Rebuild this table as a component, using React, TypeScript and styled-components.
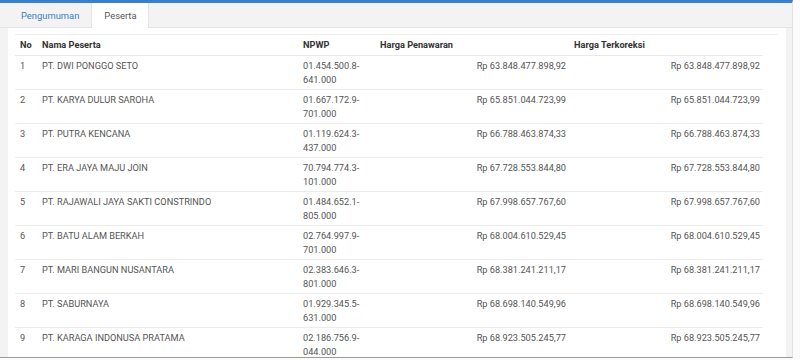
import React from "react";
import styled, { createGlobalStyle } from "styled-components";

const Global = createGlobalStyle`
  html, body { margin: 0; padding: 0; background: #fbfbfb; }
  body { font-family: Roboto, "Noto Sans", "Liberation Sans", sans-serif; }
`;

const Viewport = styled.div`
  width: 800px;
  height: 360px;
  overflow: hidden;
  display: flex;
  background: #fbfbfb;
`;

const Page = styled.div`
  width: 793px;
  height: 358px;
  overflow: hidden;
  flex: none;
  background: #f3f3f3;
  border-top: 3px solid #3a7fcb;
  border-right: 1px solid #e2e2e2;
  border-bottom: 1px solid #9a9a9a;
  box-sizing: border-box;
  display: flex;
  flex-direction: column;
`;

const TabBar = styled.div`
  display: flex;
  height: 24px;
  padding-left: 8px;
  border-bottom: 1px solid #e3e3e3;
  flex: none;
`;

const Tab = styled.div<{ $active?: boolean }>`
  display: flex;
  align-items: center;
  padding: 0 11px 0 12px;
  font-size: 9.4px;
  color: ${(p) => (p.$active ? "#555" : "#3b7fc4")};
  background: ${(p) => (p.$active ? "#fff" : "transparent")};
  border-left: 1px solid ${(p) => (p.$active ? "#e3e3e3" : "transparent")};
  border-right: 1px solid ${(p) => (p.$active ? "#e3e3e3" : "transparent")};
  margin-bottom: ${(p) => (p.$active ? "-1px" : "0")};
`;

const Panel = styled.div`
  margin-left: 8px;
  width: 778px;
  flex: 1;
  background: #fff;
  padding: 6px 8px 0 7px;
  box-sizing: border-box;
`;

const TableWrap = styled.div`
  border-top: 1px solid #ededed;
`;

const Table = styled.table`
  width: 748px;
  table-layout: fixed;
  border-collapse: collapse;
  font-size: 9.2px;
  color: #555;
`;

const Col = styled.col<{ $w: number }>`
  width: ${(p) => p.$w}px;
`;

const Th = styled.th`
  text-align: left;
  font-weight: 700;
  color: #333;
  padding: 3px 5px;
  line-height: 14px;
  border-bottom: 1px solid #e8e8e8;
`;

const Td = styled.td<{ $right?: boolean }>`
  vertical-align: top;
  text-align: ${(p) => (p.$right ? "right" : "left")};
  padding: ${(p) => (p.$right ? "3px 3px 2px 5px" : "3px 5px 2px")};
  line-height: 14px;
  border-bottom: 1px solid #ececec;
`;

const rows = [
  ["PT. DWI PONGGO SETO", "01.454.500.8-641.000", "Rp 63.848.477.898,92"],
  ["PT. KARYA DULUR SAROHA", "01.667.172.9-701.000", "Rp 65.851.044.723,99"],
  ["PT. PUTRA KENCANA", "01.119.624.3-437.000", "Rp 66.788.463.874,33"],
  ["PT. ERA JAYA MAJU JOIN", "70.794.774.3-101.000", "Rp 67.728.553.844,80"],
  ["PT. RAJAWALI JAYA SAKTI CONSTRINDO", "01.484.652.1-805.000", "Rp 67.998.657.767,60"],
  ["PT. BATU ALAM BERKAH", "02.764.997.9-701.000", "Rp 68.004.610.529,45"],
  ["PT. MARI BANGUN NUSANTARA", "02.383.646.3-801.000", "Rp 68.381.241.211,17"],
  ["PT. SABURNAYA", "01.929.345.5-631.000", "Rp 68.698.140.549,96"],
  ["PT. KARAGA INDONUSA PRATAMA", "02.186.756.9-044.000", "Rp 68.923.505.245,77"],
];

export default function App() {
  return (
    <>
      <Global />
      <Viewport>
        <Page>
          <TabBar>
            <Tab>Pengumuman</Tab>
            <Tab $active>Peserta</Tab>
          </TabBar>
          <Panel>
            <TableWrap>
              <Table>
                <colgroup>
                  <Col $w={22} />
                  <Col $w={261} />
                  <Col $w={77} />
                  <Col $w={194} />
                  <Col $w={194} />
                </colgroup>
                <thead>
                  <tr>
                    <Th>No</Th>
                    <Th>Nama Peserta</Th>
                    <Th>NPWP</Th>
                    <Th>Harga Penawaran</Th>
                    <Th>Harga Terkoreksi</Th>
                  </tr>
                </thead>
                <tbody>
                  {rows.map((r, i) => {
                    const [a, b] = r[1].split("-");
                    return (
                      <tr key={i}>
                        <Td>{i + 1}</Td>
                        <Td>{r[0]}</Td>
                        <Td>
                          {a}-
                          <br />
                          {b}
                        </Td>
                        <Td $right>{r[2]}</Td>
                        <Td $right>{r[2]}</Td>
                      </tr>
                    );
                  })}
                </tbody>
              </Table>
            </TableWrap>
          </Panel>
        </Page>
      </Viewport>
    </>
  );
}
